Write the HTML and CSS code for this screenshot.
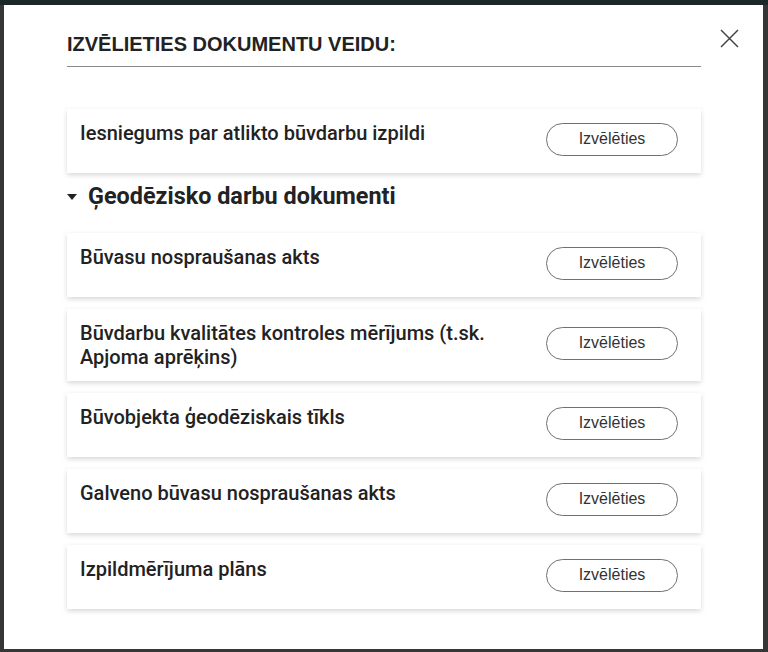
FILE: index.html
```html
<!DOCTYPE html>
<html lang="lv">
<head>
    <meta charset="UTF-8">
    <meta name="viewport" content="width=device-width, initial-scale=1.0">
    <title>Dokumenta veids</title>
    <link rel="stylesheet" href="styles.css">
</head>
<body>
    <div class="overlay">
        <div class="modal">
            <button class="close" aria-label="Aizvērt">
                <svg width="19" height="19" viewBox="0 0 19 19">
                    <path d="M1 1 L18 18 M18 1 L1 18" stroke="#444" stroke-width="1.5" fill="none"/>
                </svg>
            </button>

            <h2 class="modal-title">IZVĒLIETIES DOKUMENTU VEIDU:</h2>

            <div class="doc-list">
                <div class="doc-card">
                    <div class="doc-name">Iesniegums par atlikto būvdarbu izpildi</div>
                    <button class="pick-btn">Izvēlēties</button>
                </div>

                <div class="group-title"><span class="caret"></span>Ģeodēzisko darbu dokumenti</div>

                <div class="doc-card">
                    <div class="doc-name">Būvasu nospraušanas akts</div>
                    <button class="pick-btn">Izvēlēties</button>
                </div>
                <div class="doc-card">
                    <div class="doc-name">Būvdarbu kvalitātes kontroles mērījums (t.sk. Apjoma aprēķins)</div>
                    <button class="pick-btn">Izvēlēties</button>
                </div>
                <div class="doc-card">
                    <div class="doc-name">Būvobjekta ģeodēziskais tīkls</div>
                    <button class="pick-btn">Izvēlēties</button>
                </div>
                <div class="doc-card">
                    <div class="doc-name">Galveno būvasu nospraušanas akts</div>
                    <button class="pick-btn">Izvēlēties</button>
                </div>
                <div class="doc-card">
                    <div class="doc-name">Izpildmērījuma plāns</div>
                    <button class="pick-btn">Izvēlēties</button>
                </div>
            </div>
        </div>
    </div>
</body>
</html>
```

FILE: styles.css
```css
body {
    margin: 0;
    padding: 0;
    font-family: Roboto, "Liberation Sans", Arial, sans-serif;
    color: #222;
    background: linear-gradient(#1b2828 0, #1b2828 5px, #363636 5px);
}
.overlay {
    height: 652px;
    padding: 5px 5px 0 4px;
    box-sizing: border-box;
}
.modal {
    position: relative;
    background-color: #fff;
    height: 644px;
    padding: 27px 62px 0 63px;
    box-sizing: border-box;
}
.close {
    position: absolute;
    top: 24px;
    right: 24px;
    padding: 0;
    border: none;
    background: none;
    cursor: pointer;
}
.close svg {
    display: block;
}
.modal-title {
    margin: 0;
    padding-bottom: 10px;
    border-bottom: 1px solid #8a8a8a;
    font-family: "Liberation Sans", Arial, sans-serif;
    font-size: 20px;
    line-height: 24px;
    font-weight: bold;
    color: #222;
}
.doc-list {
    display: flex;
    flex-direction: column;
    gap: 12px;
    margin-top: 42px;
}
.doc-card {
    display: flex;
    justify-content: space-between;
    align-items: center;
    min-height: 64px;
    padding: 12px 23px 12px 13px;
    box-sizing: border-box;
    background-color: #fff;
    box-shadow: 0 2px 5px rgba(0,0,0,0.16);
}
.doc-name {
    align-self: flex-start;
    max-width: 440px;
    font-size: 20px;
    line-height: 24px;
    font-weight: 500;
}
.pick-btn {
    flex-shrink: 0;
    width: 132px;
    height: 33px;
    margin-bottom: 4px;
    border: 1px solid #707070;
    border-radius: 17px;
    background-color: #fff;
    font-family: "Liberation Sans", Arial, sans-serif;
    font-size: 16px;
    color: #333;
    cursor: pointer;
}
.group-title {
    display: flex;
    align-items: center;
    margin: -2px 0 11px;
    font-size: 23.4px;
    line-height: 27px;
    font-weight: bold;
}
.caret {
    width: 0;
    height: 0;
    margin-right: 11px;
    border-left: 5px solid transparent;
    border-right: 5px solid transparent;
    border-top: 6px solid #222;
}
```
